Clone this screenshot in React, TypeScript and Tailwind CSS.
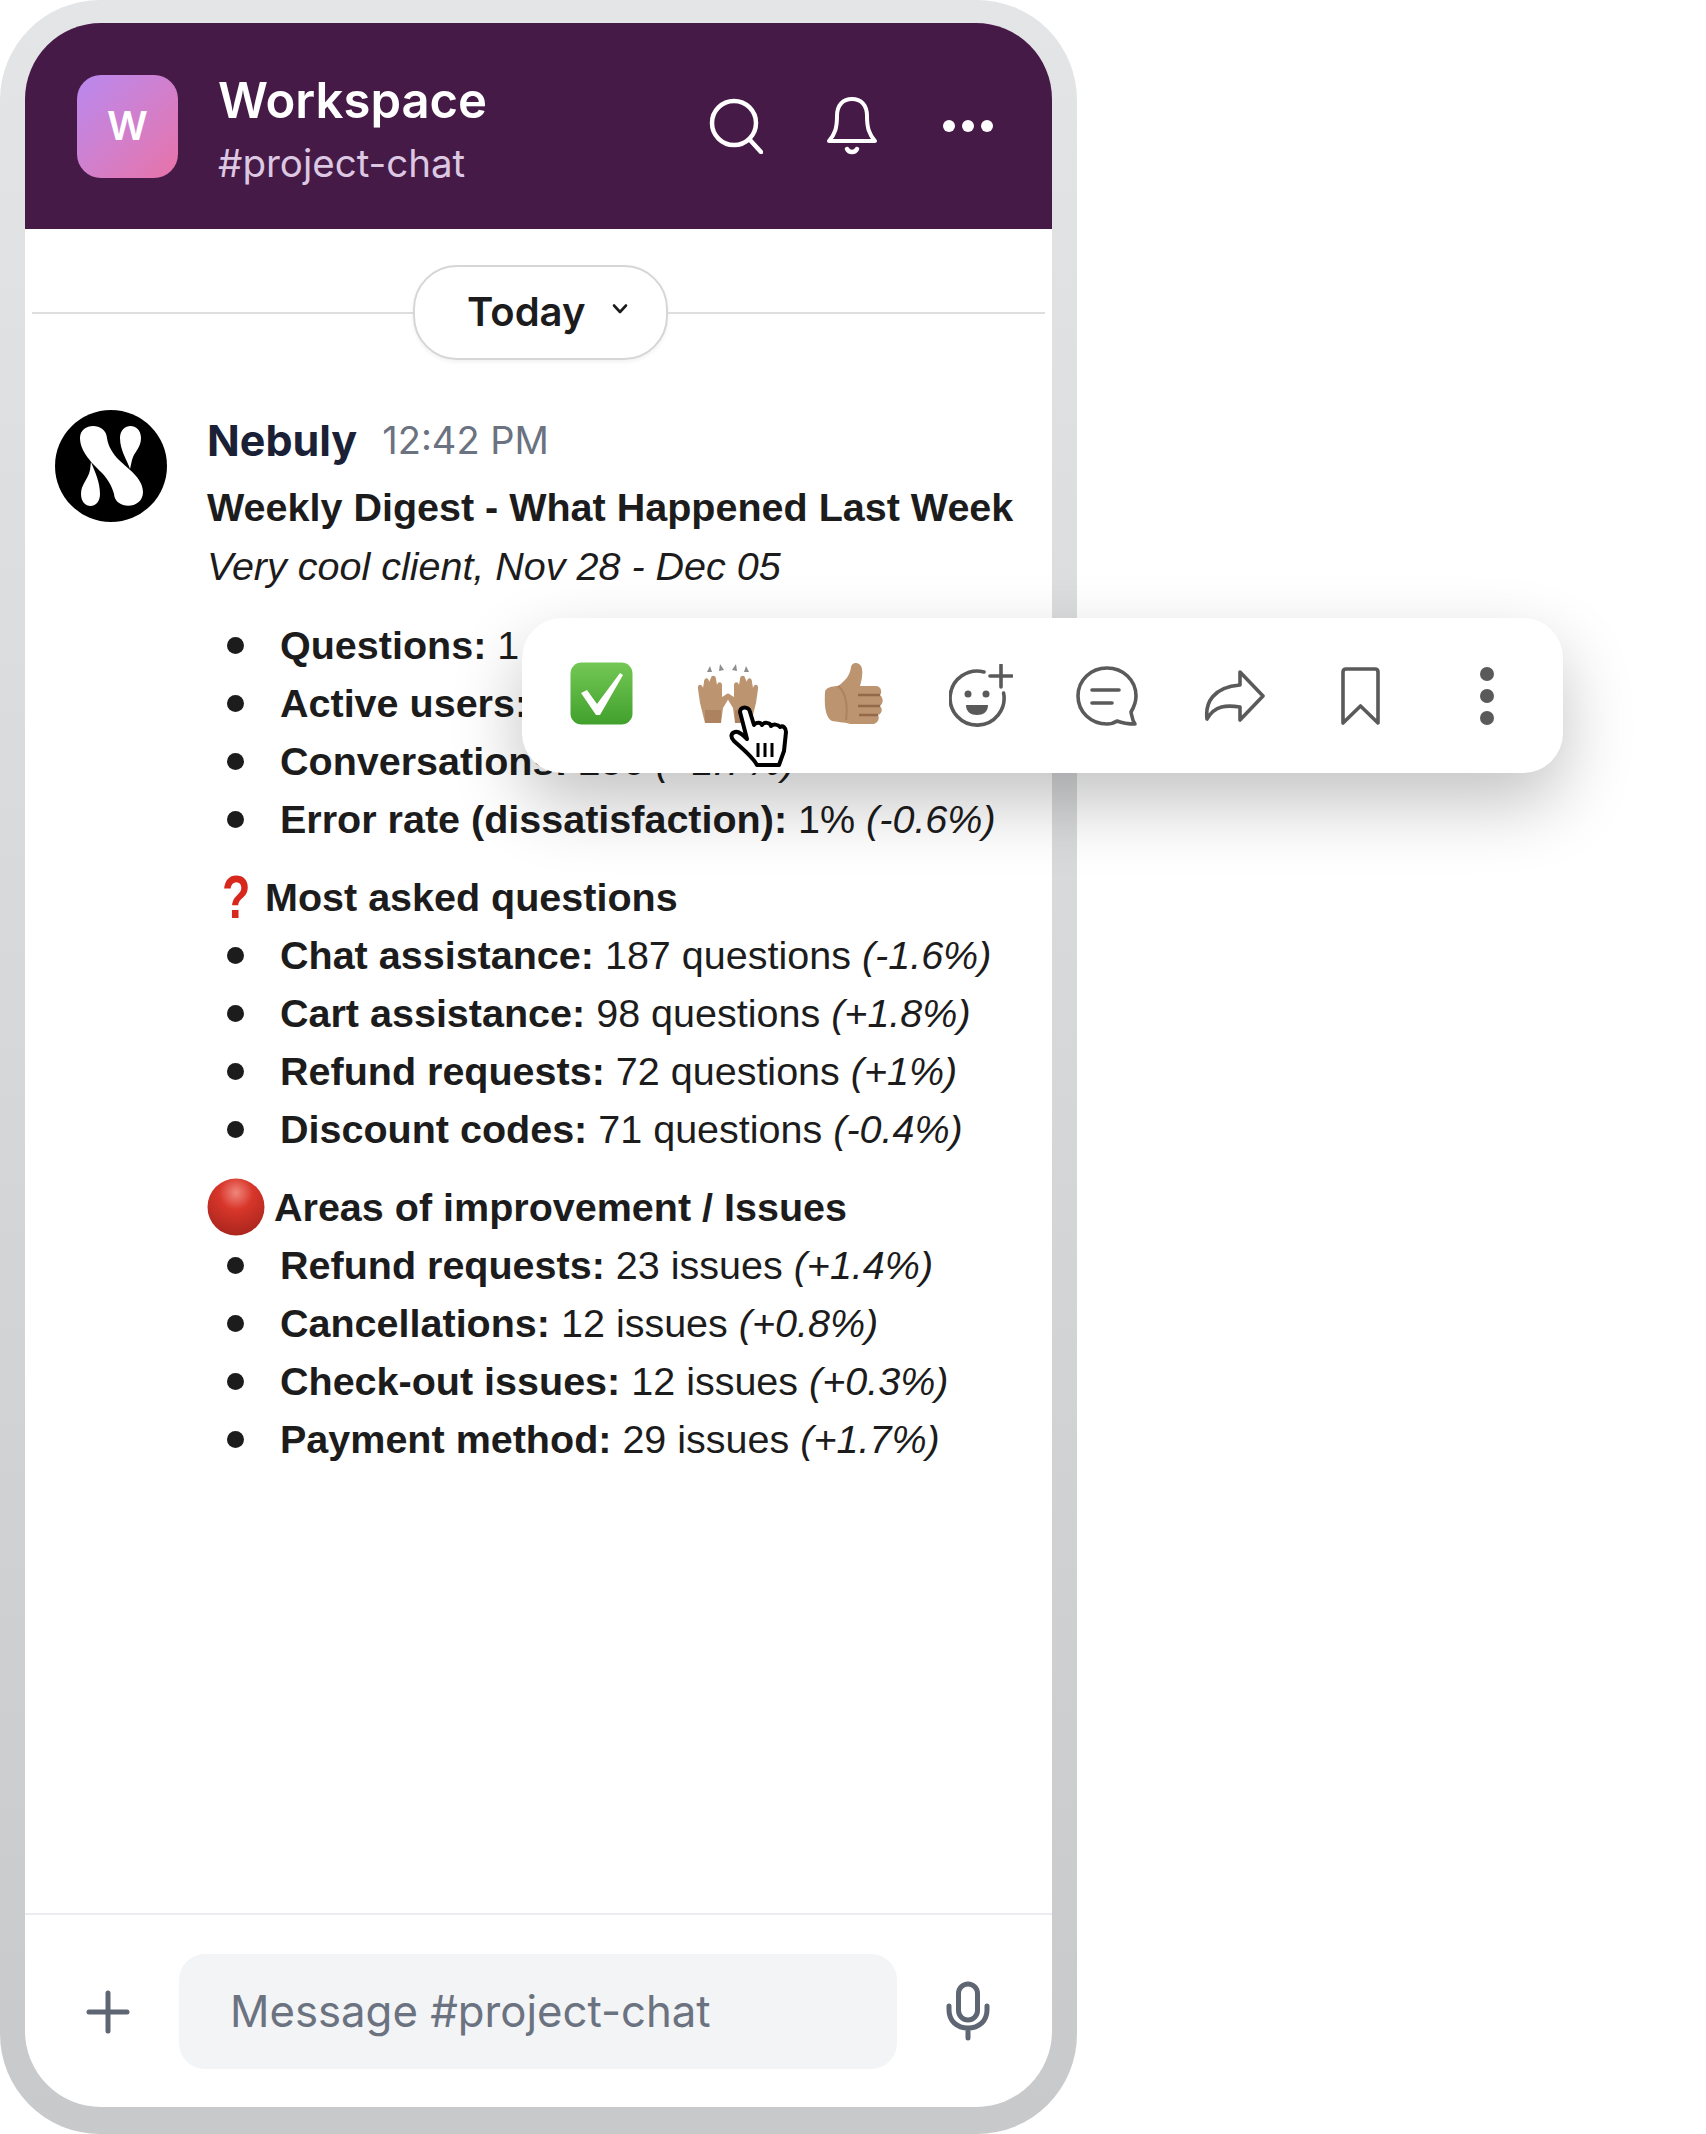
import type { ReactNode } from 'react'

const sans = 'font-["Liberation_Sans",Arial,sans-serif]'
const inter = 'font-["Inter","Noto_Sans",sans-serif]'

interface ListItem {
  label: string
  value: string
  delta: string
}

const overview: ListItem[] = [
  { label: 'Questions:', value: '1,024', delta: '(+2.1%)' },
  { label: 'Active users:', value: '312', delta: '(+0.9%)' },
  { label: 'Conversations:', value: '256', delta: '(+1.7%)' },
  { label: 'Error rate (dissatisfaction):', value: '1%', delta: '(-0.6%)' },
]

const asked: ListItem[] = [
  { label: 'Chat assistance:', value: '187 questions', delta: '(-1.6%)' },
  { label: 'Cart assistance:', value: '98 questions', delta: '(+1.8%)' },
  { label: 'Refund requests:', value: '72 questions', delta: '(+1%)' },
  { label: 'Discount codes:', value: '71 questions', delta: '(-0.4%)' },
]

const issues: ListItem[] = [
  { label: 'Refund requests:', value: '23 issues', delta: '(+1.4%)' },
  { label: 'Cancellations:', value: '12 issues', delta: '(+0.8%)' },
  { label: 'Check-out issues:', value: '12 issues', delta: '(+0.3%)' },
  { label: 'Payment method:', value: '29 issues', delta: '(+1.7%)' },
]

function BulletList({ items }: { items: ListItem[] }) {
  return (
    <ul>
      {items.map((item) => (
        <li key={item.label} className="flex h-[58px] items-center whitespace-nowrap">
          <span className="ml-[20px] mr-[36px] h-[17px] w-[17px] shrink-0 rounded-full bg-[#1d1c1d]" />
          <span>
            <b className="font-bold">{item.label}</b> {item.value} <i>{item.delta}</i>
          </span>
        </li>
      ))}
    </ul>
  )
}

function NebulyLogo() {
  return (
    <svg width="112" height="112" viewBox="0 0 112 112" className="shrink-0">
      <circle cx="56" cy="56" r="56" fill="#000" />
      <g fill="#fff">
        <path d="M25 28C25 12 51 12 52 28C53 36 58 44 64 50C72 58 88 68 88 82C88 100 60 100 59 84C57 76 52 68 46 62C38 54 25 42 25 28Z" />
        <path d="M65 28C65 12 86 12 86 28C86 38 79 42 77 50L75 59C72 50 65 40 65 28Z" />
        <path d="M26 84C26 74 33 70 35 60L36 52C40 62 45 72 45 84C45 100 26 100 26 84Z" />
      </g>
    </svg>
  )
}

function CheckEmoji() {
  return (
    <svg width="63" height="63" viewBox="0 0 63 63">
      <defs>
        <linearGradient id="check-bg" x1="0" y1="0" x2="0" y2="1">
          <stop offset="0" stopColor="#74c855" />
          <stop offset="1" stopColor="#41a02c" />
        </linearGradient>
      </defs>
      <rect x="0.5" y="0.5" width="62" height="62" rx="11" fill="url(#check-bg)" />
      <path d="M11 31L17 28L27 42L50 11L53 13L30 53H26Z" fill="#fff" />
    </svg>
  )
}

function RaisedHandsEmoji() {
  const hand =
    'M4 40L2 26C1 21 6 20 7 25L8 19C8 14 13 14 13 19L15 15C15 12 20 12 20 16L21 22C22 18 26 19 26 22L26 34L31 31C34 30 35 33 33 35L27 45L25 60H9Z'
  return (
    <svg width="64" height="60" viewBox="0 0 64 60">
      <g fill="#8d8d8d">
        <path d="M11 9L14 3L16 9Z" />
        <path d="M23 8L24 1L28 7Z" />
        <path d="M36 7L40 1L41 8Z" />
        <path d="M48 9L50 3L53 9Z" />
      </g>
      <path d={hand} fill="#bd9470" />
      <path d={hand} fill="#bd9470" transform="matrix(-1 0 0 1 64 0)" />
      <path d="M9 47H25L25 60H9Z" fill="#ad825e" />
      <path d="M55 47H39L39 60H55Z" fill="#ad825e" />
    </svg>
  )
}

function ThumbEmoji() {
  return (
    <svg width="60" height="63" viewBox="0 0 60 63">
      <path
        d="M1 30C1 26 8 24 14 24C20 20 26 14 27 5C28 -1 37 0 38 7C39 14 37 20 36 24L52 24C58 24 58 32 56 33C60 36 59 42 56 44C59 47 58 52 54 53C56 56 54 62 48 62L26 62C20 60 12 60 8 59C2 56 0 46 1 30Z"
        fill="#bd9470"
      />
      <path d="M34 33H56M34 44H56M35 53H54" stroke="#94694a" strokeWidth="2.5" fill="none" />
      <path d="M14 24C22 30 24 44 22 58" stroke="#ad825e" strokeWidth="2" fill="none" />
    </svg>
  )
}

function ReactionIcon({ width, height, children }: { width: number; height: number; children: ReactNode }) {
  return (
    <svg
      width={width}
      height={height}
      viewBox={`0 0 ${width} ${height}`}
      fill="none"
      stroke="#5a5a5a"
      strokeWidth="3.6"
      strokeLinecap="round"
      strokeLinejoin="round"
    >
      {children}
    </svg>
  )
}

function HandCursor() {
  return (
    <svg width="59" height="62" viewBox="0 0 59 62" className="absolute left-[207px] top-[87px]">
      <path
        d="M11 7C11 1 20 1 21 7L25 20C27 17 32 17 33 20C35 17 41 17 42 21C44 19 49 19 51 22C54 20 57 23 57 27L55 46L50 60L28 60C24 52 14 44 5 36C1 32 2 28 6 27C10 26 14 30 18 34Z"
        fill="#fff"
        stroke="#000"
        strokeWidth="4"
        strokeLinejoin="round"
      />
      <path d="M29 38V52M36 38V52M43 38V52" stroke="#000" strokeWidth="3" />
    </svg>
  )
}

function ReactionBar() {
  return (
    <div className="absolute left-[522px] top-[618px] flex h-[155px] w-[1041px] items-center rounded-[40px] bg-white pl-[16px] shadow-[0_30px_70px_rgba(0,0,0,0.24)]">
      <HandCursor />
      <div className="mb-[5px] flex w-[126.5px] justify-center">
        <CheckEmoji />
      </div>
      <div className="mb-[5px] flex w-[126.5px] justify-center">
        <RaisedHandsEmoji />
      </div>
      <div className="mb-[5px] flex w-[126.5px] justify-center">
        <ThumbEmoji />
      </div>
      <div className="flex w-[126.5px] justify-center">
        <ReactionIcon width={64} height={64}>
          <path d="M35 8A27 27 0 1 0 54.6 29" />
          <path d="M52 1V23M41 12H63" />
          <circle cx="19" cy="30" r="3.5" fill="#5a5a5a" stroke="none" />
          <circle cx="37" cy="30" r="3.5" fill="#5a5a5a" stroke="none" />
          <path d="M17 41H39C39 48 34 51 28 51C22 51 17 48 17 41Z" fill="#5a5a5a" stroke="none" />
        </ReactionIcon>
      </div>
      <div className="flex w-[126.5px] justify-center">
        <ReactionIcon width={62} height={60}>
          <path d="M31 2C15 2 2 14 2 30C2 46 15 58 31 58C35 58 38 57 41 55C46 57 53 58 59 58C56 54 56 50 55 46C58 41 60 36 60 30C60 14 47 2 31 2Z" />
          <path d="M16 24H43M16 37H36" />
        </ReactionIcon>
      </div>
      <div className="flex w-[126.5px] justify-center">
        <ReactionIcon width={62} height={54}>
          <path d="M37 3L60 27L37 51V38C24 36 12 36 4 50C2 34 10 18 37 16Z" />
        </ReactionIcon>
      </div>
      <div className="flex w-[126.5px] justify-center">
        <ReactionIcon width={41} height={60}>
          <path d="M3 57V6C3 4 4 3 6 3H35C37 3 38 4 38 6V57L20.5 40Z" />
        </ReactionIcon>
      </div>
      <div className="flex w-[126.5px] flex-col items-center gap-[8px]">
        <span className="h-[14px] w-[14px] rounded-full bg-[#5a5a5a]" />
        <span className="h-[14px] w-[14px] rounded-full bg-[#5a5a5a]" />
        <span className="h-[14px] w-[14px] rounded-full bg-[#5a5a5a]" />
      </div>
    </div>
  )
}

function ChatHeader() {
  return (
    <header className="flex h-[206px] shrink-0 items-center bg-[#451a47] pl-[52px] pr-[59px]">
      <div className={`flex h-[103px] w-[101px] shrink-0 items-center justify-center rounded-[24px] bg-gradient-to-br from-[#b888f0] to-[#e872a8] text-[40px] font-semibold text-white ${inter}`}>
        W
      </div>
      <div className={`ml-[40px] mt-[6px] flex-1 ${inter}`}>
        <div className="text-[49px] font-semibold leading-[58px] text-white">Workspace</div>
        <div className="mt-[10px] text-[38.5px] leading-[46px] text-[#dcc8e2]">#project-chat</div>
      </div>
      <svg width="54" height="56" viewBox="0 0 54 56" fill="none" stroke="#fff" strokeWidth="4.5" strokeLinecap="round">
        <circle cx="25" cy="25" r="22" />
        <path d="M41 42L52 54" />
      </svg>
      <svg width="52" height="60" viewBox="0 0 52 60" fill="none" stroke="#fff" strokeWidth="4" strokeLinecap="round" strokeLinejoin="round" className="ml-[63px]">
        <path d="M3 45C9 38 11 32 11 20C11 9 17 3 26 3C35 3 41 9 41 20C41 32 43 38 49 45Z" />
        <path d="M21 53C23 57 29 57 31 53" strokeWidth="4.5" />
      </svg>
      <div className="ml-[65px] flex w-[50px] justify-between">
        <span className="h-[12px] w-[12px] rounded-full bg-white" />
        <span className="h-[12px] w-[12px] rounded-full bg-white" />
        <span className="h-[12px] w-[12px] rounded-full bg-white" />
      </div>
    </header>
  )
}

function DateDivider() {
  return (
    <div className="mx-[7px] mt-[36px] flex items-center">
      <div className="h-[2px] w-[381px] bg-[#dedede]" />
      <div className={`flex h-[95px] w-[255px] items-center gap-[26px] rounded-[44px] border-2 border-[#d6d6d6] bg-white pl-[52px] text-[40px] font-semibold text-[#1d1c1d] shadow-[0_2px_4px_rgba(0,0,0,0.06)] ${inter}`}>
        <span className="mb-[2px]">Today</span>
        <svg width="18" height="12" viewBox="0 0 18 12" fill="none" stroke="#1d1c1d" strokeWidth="2.6" strokeLinecap="round" strokeLinejoin="round" className="mb-[8px]">
          <path d="M3 2.5L9 9L15 2.5" />
        </svg>
      </div>
      <div className="h-[2px] flex-1 bg-[#dedede]" />
    </div>
  )
}

function Message() {
  return (
    <div className="ml-[30px] mt-[50px] flex gap-[39px]">
      <NebulyLogo />
      <div className={`min-w-0 pl-[1px] text-[39.5px] leading-[58px] text-[#1d1c1d] ${sans}`}>
        <div className="mb-[1px] mt-[1px] flex h-[58px] items-center gap-[25px] whitespace-nowrap">
          <span className={`text-[43px] font-bold text-[#1a2035] ${inter}`}>Nebuly</span>
          <span className={`text-[38px] text-[#6b7280] ${inter}`}>12:42 PM</span>
        </div>
        <div className="mt-[9px] whitespace-nowrap font-bold">Weekly Digest - What Happened Last Week</div>
        <div className="mt-[1px] whitespace-nowrap italic">Very cool client, Nov 28 - Dec 05</div>
        <div className="mt-[21px]">
          <BulletList items={overview} />
        </div>
        <div className="mt-[20px] flex h-[58px] items-center whitespace-nowrap font-bold">
          <span className="ml-[15px] w-[43px] origin-left scale-x-75 text-[62px] font-black leading-none text-[#d8281e]">?</span>
          <span>Most asked questions</span>
        </div>
        <BulletList items={asked} />
        <div className="mt-[20px] flex h-[58px] items-center whitespace-nowrap font-bold">
          <svg width="58" height="58" viewBox="0 0 58 58" className="mr-[9px] shrink-0">
            <defs>
              <radialGradient id="red-dot" cx="0.5" cy="0.25" r="0.85">
                <stop offset="0" stopColor="#f0867c" />
                <stop offset="0.35" stopColor="#d8362a" />
                <stop offset="1" stopColor="#a0221a" />
              </radialGradient>
            </defs>
            <circle cx="29" cy="29" r="28.5" fill="url(#red-dot)" />
          </svg>
          <span>Areas of improvement / Issues</span>
        </div>
        <BulletList items={issues} />
      </div>
    </div>
  )
}

function Composer() {
  return (
    <footer className="flex h-[194px] shrink-0 items-start border-t-2 border-[#ebebf0] pt-[39px]">
      <svg width="44" height="44" viewBox="0 0 44 44" fill="none" stroke="#5f6673" strokeWidth="5" strokeLinecap="round" className="ml-[61px] mt-[36px] shrink-0">
        <path d="M22 3V41M3 22H41" />
      </svg>
      <div className={`ml-[49px] flex h-[115px] w-[718px] items-center rounded-[26px] bg-[#f3f4f6] pl-[51px] text-[43.7px] text-[#6b7280] ${inter}`}>
        Message #project-chat
      </div>
      <svg width="44" height="60" viewBox="0 0 44 60" fill="none" stroke="#5f6673" strokeWidth="5" strokeLinecap="round" className="ml-[49px] mt-[27px] shrink-0">
        <rect x="12.5" y="3" width="19" height="36" rx="9.5" />
        <path d="M3 25V29C3 40 11 47 22 47C33 47 41 40 41 29V25M22 47V57" />
      </svg>
    </footer>
  )
}

export default function App() {
  return (
    <div className="relative h-[2134px] w-[1706px] overflow-hidden bg-white">
      <div className="h-[2134px] w-[1077px] rounded-[100px] bg-gradient-to-b from-[#e4e5e7] to-[#c8c9cb] px-[25px] pb-[27px] pt-[23px]">
        <div className="flex h-full flex-col overflow-hidden rounded-[76px] bg-white">
          <ChatHeader />
          <main className="flex-1">
            <DateDivider />
            <Message />
          </main>
          <Composer />
        </div>
      </div>
      <ReactionBar />
    </div>
  )
}
